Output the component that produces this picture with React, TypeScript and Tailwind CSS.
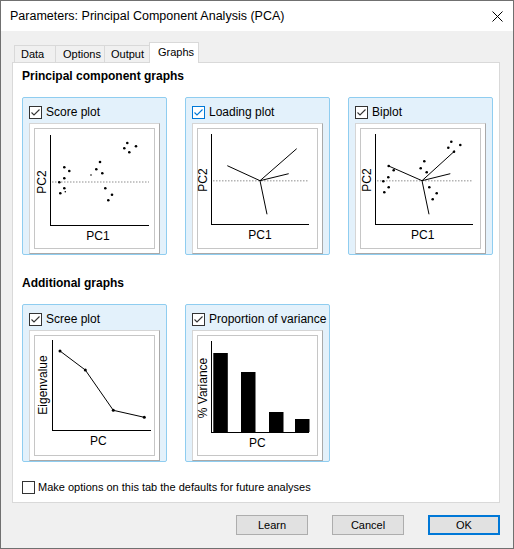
import type { ReactNode } from 'react'

const FONT = "font-['Liberation_Sans',Arial,sans-serif]"
const PLOT_FONT = 'Liberation Sans, Arial, sans-serif'

function CheckBox({ checked, blue }: { checked?: boolean; blue?: boolean }) {
  const color = blue ? '#0078d7' : '#333333'
  return (
    <span
      className={`w-[13px] h-[13px] bg-white border flex items-center justify-center shrink-0 ${
        blue ? 'border-[#0078d7]' : 'border-[#333333]'
      }`}
    >
      {checked && (
        <svg width="11" height="11" viewBox="0 0 11 11" className="block">
          <polyline points="1.5,5.5 4,8 9.5,2.5" fill="none" stroke={color} strokeWidth="1.1" />
        </svg>
      )}
    </span>
  )
}

function Frame({ children }: { children: ReactNode }) {
  return (
    <div className="w-[131px] h-[131px] bg-white border border-[#d5d5d5] border-r-[#a9a9a9] border-b-[#a9a9a9] p-[4px]">
      <svg width="121" height="121" viewBox="0 0 121 121" className="block">
        <rect x="0.5" y="0.5" width="120" height="120" fill="white" stroke="#c6c6c6" />
        {children}
      </svg>
    </div>
  )
}

function Axes({ x, top, bottom, right, dotY }: { x: number; top: number; bottom: number; right: number; dotY?: number }) {
  return (
    <>
      {dotY !== undefined && (
        <line x1={x + 2} y1={dotY} x2={right} y2={dotY} stroke="#b4b4b4" strokeWidth="1.5" strokeDasharray="1.5 1.5" />
      )}
      <line x1={x + 0.5} y1={top} x2={x + 0.5} y2={bottom + 1} stroke="black" />
      <line x1={x} y1={bottom + 0.5} x2={right} y2={bottom + 0.5} stroke="black" />
    </>
  )
}

function Label({ x, y, text, rotate }: { x: number; y: number; text: string; rotate?: boolean }) {
  return (
    <text
      transform={`translate(${x},${y})${rotate ? ' rotate(-90)' : ''}`}
      textAnchor="middle"
      dominantBaseline="central"
      fontFamily={PLOT_FONT}
      fontSize="12"
      fill="black"
    >
      {text}
    </text>
  )
}

function Dots({ pts }: { pts: number[][] }) {
  return (
    <>
      {pts.map(([x, y, r], i) => (
        <circle key={i} cx={x} cy={y} r={r ?? 1.3} fill="black" />
      ))}
    </>
  )
}

function Rays({ cx, cy, ends }: { cx: number; cy: number; ends: number[][] }) {
  return (
    <>
      {ends.map(([x, y], i) => (
        <line key={i} x1={cx} y1={cy} x2={x} y2={y} stroke="black" strokeWidth="1" />
      ))}
    </>
  )
}

function ScorePlot() {
  return (
    <Frame>
      <Axes x={16} top={7} bottom={97} right={115} dotY={54} />
      <Dots
        pts={[
          [93.3, 15], [90.3, 20.3], [95.3, 24.3], [102, 18.3],
          [30.3, 39.3], [35.3, 43], [25.3, 54.3], [30.3, 50.3], [30.3, 60.3], [26.3, 65.3], [31.3, 63.7, 0.8],
          [66, 34], [62.3, 41.3], [68.3, 45.3], [57, 47, 0.8], [71.3, 60.3], [78, 66.7], [74.3, 72.3],
        ]}
      />
      <Label x={8} y={54} text="PC2" rotate />
      <Label x={64} y={108} text="PC1" />
    </Frame>
  )
}

function LoadingPlot() {
  return (
    <Frame>
      <Axes x={14} top={6} bottom={96} right={112} dotY={52.7} />
      <Rays cx={63} cy={52.7} ends={[[30.3, 37.7], [99.7, 20.7], [91.7, 45.7], [70, 86.3]]} />
      <Label x={5.5} y={52} text="PC2" rotate />
      <Label x={63} y={106.5} text="PC1" />
    </Frame>
  )
}

function BiPlot() {
  return (
    <Frame>
      <Axes x={15} top={6} bottom={96} right={113} dotY={52.7} />
      <Rays cx={62} cy={52.7} ends={[[28.7, 38], [95, 22.7], [90.3, 45.7], [69, 86.3]]} />
      <Dots
        pts={[
          [91.3, 13.7], [88.3, 19.7], [94, 23.7], [100.3, 17],
          [28.7, 38], [33.7, 42.3], [28.3, 49.3], [23.3, 53.3], [28.7, 59.3], [24.3, 64.3],
          [64.3, 33.3], [60.7, 40.3], [66.7, 44.3], [69.3, 59.3], [76.7, 65.3], [72.7, 71.3],
        ]}
      />
      <Label x={6.7} y={52} text="PC2" rotate />
      <Label x={62.7} y={107} text="PC1" />
    </Frame>
  )
}

function ScreePlot() {
  const pts = [[26, 16], [51.3, 35], [79.3, 75.3], [110.3, 82.3]]
  return (
    <Frame>
      <Axes x={18} top={5} bottom={95} right={117} />
      <polyline points={pts.map((p) => p.join(',')).join(' ')} fill="none" stroke="black" strokeWidth="1" />
      <Dots pts={pts.map(([x, y]) => [x, y, 1.5])} />
      <Label x={9.3} y={50} text="Eigenvalue" rotate />
      <Label x={64.3} y={105.7} text="PC" />
    </Frame>
  )
}

function VariancePlot() {
  const bars = [
    [16.3, 18],
    [44, 37],
    [72, 77],
    [98, 84],
  ]
  return (
    <Frame>
      <Axes x={14} top={6} bottom={97} right={112} />
      {bars.map(([x, top], i) => (
        <rect key={i} x={x} y={top} width="14.5" height={97 - top} fill="black" />
      ))}
      <Label x={6.3} y={53} text="% Variance" rotate />
      <Label x={60.3} y={108} text="PC" />
    </Frame>
  )
}

function GraphCard({ label, blue, children }: { label: string; blue?: boolean; children: ReactNode }) {
  return (
    <div className="w-[145px] h-[158px] rounded-[2px] border border-[#8fcdf0] bg-[#e3f1fb] pt-[8px] px-[6px] flex flex-col">
      <div className="h-[13px] flex items-center gap-[4px]">
        <CheckBox checked blue={blue} />
        <span className="leading-[13px] whitespace-nowrap">{label}</span>
      </div>
      <div className="mt-[4px]">{children}</div>
    </div>
  )
}

function Tab({ label, width, pl, active }: { label: string; width: string; pl: string; active?: boolean }) {
  return (
    <div
      className={`${width} ${pl} flex items-center text-[11px] border-l border-t border-[#d9d9d9] ${
        active ? 'h-[21px] bg-white border-r relative z-10 -mb-px pb-[2px]' : 'h-[17px] bg-[#f0f0f0]'
      }`}
    >
      {label}
    </div>
  )
}

function Button({ label, primary }: { label: string; primary?: boolean }) {
  return (
    <button
      className={`w-[72px] h-[20px] flex items-center justify-center text-[11px] bg-[#e1e1e1] ${
        primary ? 'border-2 border-[#0078d7]' : 'border border-[#adadad]'
      }`}
    >
      {label}
    </button>
  )
}

export default function App() {
  return (
    <div className={`w-[514px] h-[549px] bg-[#f0f0f0] border border-[#707070] flex flex-col text-[12px] text-black ${FONT}`}>
      {/* Title bar */}
      <div className="h-[30px] bg-white flex items-center justify-between pl-[9px] pr-[10px] shrink-0">
        <span className="text-[12.5px]">Parameters: Principal Component Analysis (PCA)</span>
        <svg width="11" height="11" viewBox="0 0 11 11" className="block">
          <path d="M0.5 0.5 L10.5 10.5 M10.5 0.5 L0.5 10.5" stroke="black" strokeWidth="1" />
        </svg>
      </div>

      {/* Tabs */}
      <div className="mt-[11px] ml-[13px] flex items-end h-[20px]">
        <Tab label="Data" width="w-[41px]" pl="pl-[6px]" />
        <Tab label="Options" width="w-[49px]" pl="pl-[7px]" />
        <Tab label="Output" width="w-[45px]" pl="pl-[6px]" />
        <Tab label="Graphs" width="w-[50px]" pl="pl-[8px]" active />
      </div>

      {/* Panel */}
      <div className="ml-[11px] w-[488px] h-[441px] bg-white border border-[#d9d9d9] pl-[9px] pt-[6px] flex flex-col">
        <div className="font-bold leading-[15px]">Principal component graphs</div>
        <div className="mt-[13px] flex gap-[18px]">
          <GraphCard label="Score plot">
            <ScorePlot />
          </GraphCard>
          <GraphCard label="Loading plot" blue>
            <LoadingPlot />
          </GraphCard>
          <GraphCard label="Biplot">
            <BiPlot />
          </GraphCard>
        </div>

        <div className="mt-[21px] font-bold leading-[15px]">Additional graphs</div>
        <div className="mt-[13px] flex gap-[18px]">
          <GraphCard label="Scree plot">
            <ScreePlot />
          </GraphCard>
          <GraphCard label="Proportion of variance">
            <VariancePlot />
          </GraphCard>
        </div>

        <div className="mt-[18px] flex items-center gap-[3px] h-[15px]">
          <CheckBox />
          <span className="text-[11px]">Make options on this tab the defaults for future analyses</span>
        </div>
      </div>

      {/* Buttons */}
      <div className="mt-[12px] mr-[13px] flex justify-end gap-[24px]">
        <Button label="Learn" />
        <Button label="Cancel" />
        <Button label="OK" primary />
      </div>
    </div>
  )
}
